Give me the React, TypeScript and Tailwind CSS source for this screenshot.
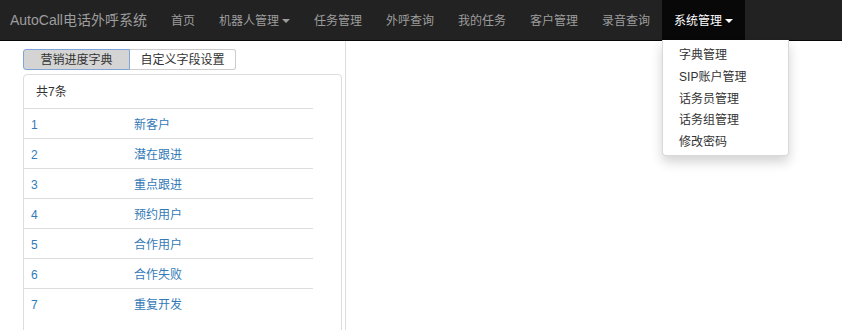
const navItems = [
  { label: "首页" },
  { label: "机器人管理", caret: true },
  { label: "任务管理" },
  { label: "外呼查询" },
  { label: "我的任务" },
  { label: "客户管理" },
  { label: "录音查询" },
]

const menu = ["字典管理", "SIP账户管理", "话务员管理", "话务组管理", "修改密码"]

const rows = [
  { id: 1, name: "新客户" },
  { id: 2, name: "潜在跟进" },
  { id: 3, name: "重点跟进" },
  { id: 4, name: "预约用户" },
  { id: 5, name: "合作用户" },
  { id: 6, name: "合作失败" },
  { id: 7, name: "重复开发" },
]

function Caret({ white }: { white?: boolean }) {
  return (
    <span
      className={`ml-[3px] inline-block h-0 w-0 border-x-[4px] border-t-[4px] border-x-transparent ${
        white ? "border-t-white" : "border-t-[#9d9d9d]"
      }`}
    />
  )
}

export default function App() {
  return (
    <div className="relative h-screen overflow-hidden bg-white font-['Liberation_Sans','Noto_Sans_CJK_SC',sans-serif] text-[12px] text-[#333]">
      {/* Top navbar */}
      <nav className="flex h-[41px] border-b border-[#080808] bg-[#222]">
        <div className="flex w-[159px] items-center pl-[10px] text-[14px] text-[#9d9d9d]">AutoCall电话外呼系统</div>
        {navItems.map((item) => (
          <div key={item.label} className="flex h-full items-center px-3 pt-px text-[#9d9d9d]">
            {item.label}
            {item.caret && <Caret />}
          </div>
        ))}
        <div className="relative flex h-full items-center bg-[#080808] px-3 pt-px text-white">
          系统管理
          <Caret white />
          {/* Dropdown */}
          <div className="absolute left-0 top-[40px] z-10 w-[127px] rounded-b-[4px] border border-t-0 border-black/15 bg-white pb-[1px] pt-[5px] shadow-[0_6px_12px_rgba(0,0,0,0.175)]">
            {menu.map((m) => (
              <div key={m} className="pl-4 leading-[21.8px] text-[#333]">
                {m}
              </div>
            ))}
          </div>
        </div>
      </nav>

      <div className="flex h-full">
        <div className="w-[346px] border-r border-[#ddd] pl-[23px] pr-[3px] pt-[8px]">
          {/* Tab buttons */}
          <div className="flex h-[21px]">
            <div className="flex w-[107px] items-center justify-center rounded-l-[3px] border border-[#7ea4da] bg-[#d4d4d4] text-[#333]">
              营销进度字典
            </div>
            <div className="flex w-[106px] items-center justify-center rounded-r-[3px] border border-l-0 border-[#ccc] bg-white text-[#333]">
              自定义字段设置
            </div>
          </div>

          {/* Panel */}
          <div className="mt-[4px] h-[300px] rounded-[4px] border border-[#ddd]">
            <div className="flex h-[34px] w-[289px] items-center border-b border-[#ddd] pl-3 pt-px">共7条</div>
            <div className="w-[289px]">
              {rows.map((r, i) => (
                <div
                  key={r.id}
                  className={`flex h-[30px] items-center pt-[2px] text-[#337ab7] ${i < rows.length - 1 ? "border-b border-[#ddd]" : ""}`}
                >
                  <div className="w-[110px] pl-[7px]">{r.id}</div>
                  <div>{r.name}</div>
                </div>
              ))}
            </div>
          </div>
        </div>
        <div className="flex-1" />
      </div>
    </div>
  )
}
